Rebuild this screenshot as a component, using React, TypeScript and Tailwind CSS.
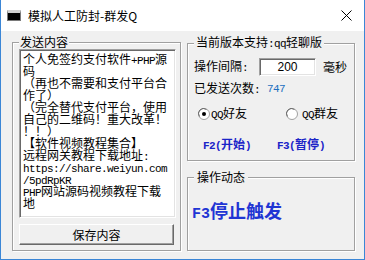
import React from 'react'

const Lat = ({ children, className = '' }: { children: React.ReactNode; className?: string }) => (
    <span className={`font-['Liberation_Mono',monospace] text-[11px] tracking-[-0.6px] ${className}`}>{children}</span>
)

const Radio = ({ checked }: { checked?: boolean }) => (
    <svg width="12" height="12" viewBox="0 0 12 12" className="shrink-0">
        <circle cx="6" cy="6" r="5.5" fill="#fff" stroke="#a0a0a0" />
        <path d="M1.5 8.5 A5 5 0 0 1 8.5 1.5" fill="none" stroke="#696969" />
        {checked && <circle cx="6" cy="6" r="2" fill="#000" />}
    </svg>
)

const lines: React.ReactNode[] = [
    <>个人免签约支付软件<Lat>+PHP</Lat>源</>,
    <>码</>,
    <>（再也不需要和支付平台合</>,
    <>作了）</>,
    <>（完全替代支付平台，使用</>,
    <>自己的二维码！重大改革！</>,
    <>！！）</>,
    <>【软件视频教程集合】</>,
    <>远程网关教程下载地址<Lat>:</Lat></>,
    <Lat>https://share.weiyun.com</Lat>,
    <Lat>/5pdRpKR</Lat>,
    <><Lat>PHP</Lat>网站源码视频教程下载</>,
    <>地</>,
]

export default function App() {
    return (
        <div className="w-[365px] h-[260px] flex flex-col bg-[#f0f0f0] border-x border-b border-[#3b86d6] text-[12px] text-black font-['Noto_Sans_CJK_SC',sans-serif] overflow-hidden">
            {/* title bar */}
            <div className="h-[31px] shrink-0 bg-white flex items-center pl-[6px] pr-[12px]">
                <div className="w-[14px] h-[11px] bg-black border border-[#7a7a7a] border-t-[3px] border-t-[#cfcfcf]" />
                <span className="ml-[7px] leading-[14px]">模拟人工防封-群发Q</span>
                <svg className="ml-auto" width="11" height="11" viewBox="0 0 11 11">
                    <path d="M0.5 0.5 L10.5 10.5 M10.5 0.5 L0.5 10.5" stroke="#000" strokeWidth="1" />
                </svg>
            </div>

            <div className="flex pl-[11px] pt-[4px] gap-[6px]">
                {/* send content */}
                <fieldset className="w-[169px] h-[216px] border border-[#a0a0a0] shadow-[inset_1px_1px_0_#fff,1px_1px_0_#fff] pl-[6px] pr-[4px]">
                    <legend className="px-[1px] leading-[14px] bg-[#f0f0f0]">发送内容</legend>
                    <div className="w-[157px] h-[169px] bg-white border border-t-[#a0a0a0] border-l-[#a0a0a0] border-b-white border-r-white shadow-[inset_1px_1px_0_#696969,inset_-1px_-1px_0_#e3e3e3] pt-[3px] pl-[3px] overflow-hidden">
                        {lines.map((l, i) => (
                            <div key={i} className="h-[12px] leading-[12px] whitespace-nowrap">{l}</div>
                        ))}
                    </div>
                    <button className="mt-[6px] w-[155px] h-[21px] bg-[#f0f0f0] border border-t-white border-l-white border-b-[#696969] border-r-[#696969] shadow-[inset_-1px_-1px_0_#a0a0a0] leading-[14px] text-[12px]">
                        保存内容
                    </button>
                </fieldset>

                <div className="flex flex-col">
                    {/* settings */}
                    <fieldset className="w-[168px] h-[126px] border border-[#a0a0a0] shadow-[inset_1px_1px_0_#fff,1px_1px_0_#fff] pl-[6px]">
                        <legend className="px-[2px] leading-[14px] bg-[#f0f0f0]">当前版本支持<Lat>:qq</Lat>轻聊版</legend>
                        <div className="mt-[7px] h-[18px] flex items-center">
                            <span className="w-[65px] leading-[14px]">操作间隔<Lat>:</Lat></span>
                            <div className="w-[57px] h-[18px] bg-white border border-t-[#a0a0a0] border-l-[#a0a0a0] border-b-white border-r-white shadow-[inset_1px_1px_0_#696969,inset_-1px_-1px_0_#e3e3e3] flex items-center justify-center">
                                <span className="font-['Liberation_Sans',sans-serif] text-[12px] leading-[14px]">200</span>
                            </div>
                            <span className="ml-[7px] leading-[14px]">毫秒</span>
                        </div>
                        <div className="mt-[6px] h-[14px] flex items-center">
                            <span className="w-[73px] leading-[14px]">已发送次数<Lat>:</Lat></span>
                            <Lat className="text-[#1b6fc0]">747</Lat>
                        </div>
                        <div className="mt-[11px] h-[14px] flex items-center pl-[4px]">
                            <Radio checked />
                            <span className="ml-[1px] w-[75px] leading-[14px]"><Lat>QQ</Lat>好友</span>
                            <Radio />
                            <span className="ml-[4px] leading-[14px]"><Lat>QQ</Lat>群友</span>
                        </div>
                        <div className="mt-[17px] h-[14px] flex items-center pl-[9px] font-bold text-[#1b24c8]">
                            <span className="w-[74px] leading-[14px]"><Lat>F2(</Lat>开始<Lat>)</Lat></span>
                            <span className="leading-[14px]"><Lat>F3(</Lat>暂停<Lat>)</Lat></span>
                        </div>
                    </fieldset>

                    {/* status */}
                    <fieldset className="mt-[9px] w-[168px] h-[81px] border border-[#a0a0a0] shadow-[inset_1px_1px_0_#fff,1px_1px_0_#fff] pl-[6px]">
                        <legend className="px-[3px] leading-[14px] bg-[#f0f0f0]">操作动态</legend>
                        <div className="mt-[15px] -ml-[2px] font-bold text-[18px] leading-[22px] text-[#1f35d4]">
                            <span className="font-['Liberation_Mono',monospace] text-[15px]">F3</span>停止触发
                        </div>
                    </fieldset>
                </div>
            </div>
        </div>
    )
}
